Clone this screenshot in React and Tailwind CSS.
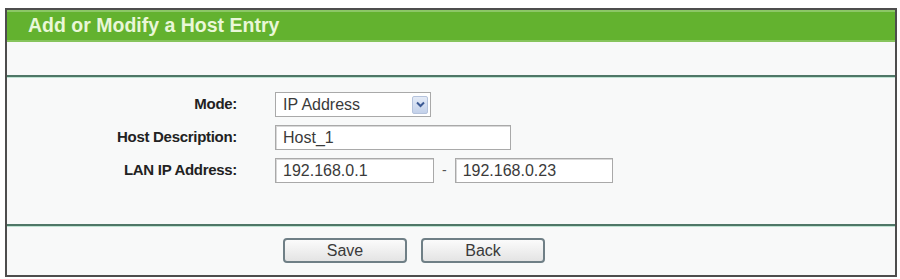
import React from 'react';

const font = { fontFamily: '"Liberation Sans", Arial, sans-serif' };

const Row = ({ label, children }) => (
  <div className="flex items-center h-[25px]">
    <div className="w-[230px] text-right text-[15px] font-bold text-[#222] tracking-[-0.3px]">{label}</div>
    <div className="ml-[38px] flex items-center">{children}</div>
  </div>
);

const Box = ({ value, w }) => (
  <div className={`${w} h-[25px] border border-[#a9a9a9] bg-white pl-[7px] flex items-center text-[16px] text-[#3a3a3a] shadow-[inset_1px_1px_0_#d8d8d8]`}>
    {value}
  </div>
);

const App = () => {
  return (
    <div className="w-[900px] h-[279px] bg-white pt-[8px] pl-[5px]" style={font}>
      <div className="w-[892px] h-[269px] border-2 border-[#4d4d4d] bg-[#f8f9f9] flex flex-col">
        {/* titulo */}
        <div className="h-[32px] bg-[#63b22f] border-t-2 border-b-2 border-t-[#8cc766] border-b-[#86c45c] flex items-center pl-[21px]">
          <span className="text-[19.5px] font-bold text-[#e9f7d8] leading-none">Add or Modify a Host Entry</span>
        </div>
        <div className="h-[33px]" />
        <div className="h-[2px] bg-[#4f7767] shadow-[0_1px_0_#bfe3d3]" />

        {/* formulario */}
        <div className="flex-1 pt-[15px] flex flex-col gap-[8px]">
          <Row label="Mode:">
            <div className="w-[156px] h-[25px] border border-[#a9a9a9] bg-white pl-[7px] pr-[2px] flex items-center justify-between text-[16px] text-[#3a3a3a]">
              <span>IP Address</span>
              <div className="w-[16px] h-[18px] rounded-[2px] border border-[#b5c3dc] bg-gradient-to-b from-[#e4ebf7] to-[#c3d1ea] flex items-center justify-center">
                <svg width="9" height="7" viewBox="0 0 9 7">
                  <path d="M1 1.5 L4.5 5 L8 1.5" stroke="#3c5a94" strokeWidth="2" fill="none" />
                </svg>
              </div>
            </div>
          </Row>
          <Row label="Host Description:">
            <Box value="Host_1" w="w-[236px]" />
          </Row>
          <Row label="LAN IP Address:">
            <Box value="192.168.0.1" w="w-[159px]" />
            <span className="mx-[8px] text-[14px] text-[#555]">-</span>
            <Box value="192.168.0.23" w="w-[158px]" />
          </Row>
        </div>

        <div className="h-[2px] bg-[#4f7767] shadow-[0_1px_0_#bfe3d3]" />

        {/* botones */}
        <div className="h-[49px] pt-[12px] pl-[276px] flex gap-[14px]">
          <button className="w-[124px] h-[25px] rounded-[4px] border-2 border-[#6f7f86] bg-gradient-to-b from-[#fbfbfb] to-[#e4e4e4] text-[16px] text-[#3a3a3a] leading-none">
            Save
          </button>
          <button className="w-[124px] h-[25px] rounded-[4px] border-2 border-[#6f7f86] bg-gradient-to-b from-[#fbfbfb] to-[#e4e4e4] text-[16px] text-[#3a3a3a] leading-none">
            Back
          </button>
        </div>
      </div>
    </div>
  );
};

export default App;
